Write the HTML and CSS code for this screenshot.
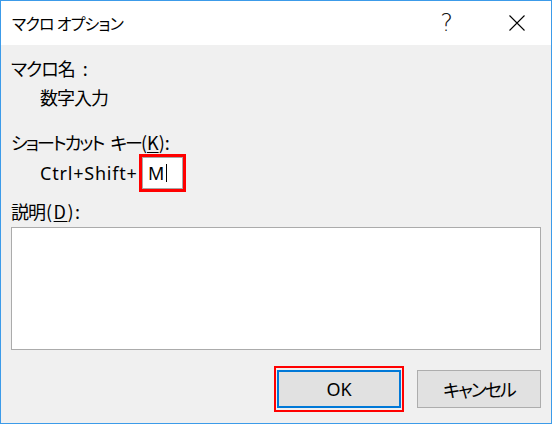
FILE: index.html
```html
<!DOCTYPE html>
<html lang="ja">
<head>
<meta charset="utf-8">
<title>マクロ オプション</title>
<link rel="stylesheet" href="styles.css">
</head>
<body>
<div class="window">
  <div class="titlebar">
    <div class="title">マクロ オプション</div>
    <div class="caption-btn help">?</div>
    <div class="caption-btn close">
      <svg width="16" height="16" viewBox="0 0 16 16"><path d="M0.5 0.5 L15.5 15.5 M15.5 0.5 L0.5 15.5" stroke="#000" stroke-width="1.1" fill="none"/></svg>
    </div>
  </div>
  <div class="content">
    <div class="row label">マクロ名<span class="colon">:</span></div>
    <div class="row indent">数字入力</div>
    <div class="row label gap-lg kana">ショートカット<span class="word">キー</span><span class="paren">(<u>K</u>):</span></div>
    <div class="shortcut indent">
      <span class="prefix">Ctrl+Shift+</span>
      <div class="keybox"><span class="key">M</span><span class="caret"></span></div>
    </div>
    <div class="row label desc">説明<span class="acc">(<u>D</u>):</span></div>
    <div class="textarea"></div>
    <div class="buttons">
      <div class="btn default">OK</div>
      <div class="btn cancel">キャンセル</div>
    </div>
  </div>
</div>
</body>
</html>
```
FILE: styles.css
```css
html, body {
  margin: 0;
  padding: 0;
}
body {
  font-family: "Noto Sans CJK JP", "Noto Sans", sans-serif;
  font-feature-settings: "palt";
  color: #000;
}
.window {
  width: 552px;
  height: 424px;
  box-sizing: border-box;
  border: 1px solid #3c9be9;
  background: #f0f0f0;
  display: flex;
  flex-direction: column;
}
.titlebar {
  height: 44px;
  background: #fff;
  display: flex;
  align-items: center;
  flex: none;
}
.title {
  flex: 1;
  padding-left: 11px;
  font-size: 16px;
  letter-spacing: -0.8px;
  line-height: 44px;
}
.caption-btn {
  width: 69px;
  height: 44px;
  display: flex;
  align-items: center;
  justify-content: center;
}
.help {
  font-family: "DejaVu Sans", sans-serif;
  font-weight: 200;
  font-size: 24px;
  color: #111;
  padding-right: 2px;
  box-sizing: border-box;
}
.content {
  padding: 11px 10px 0 10px;
  font-size: 18px;
  letter-spacing: -1px;
}
.row {
  height: 24px;
  line-height: 24px;
  white-space: nowrap;
}
.colon {
  margin-left: 8px;
}
.kana {
  letter-spacing: -2px;
}
.word {
  margin-left: 7px;
}
.paren {
  letter-spacing: 0;
}
.acc {
  letter-spacing: 1.5px;
  margin-left: 1px;
}
.indent {
  margin-left: 29px;
  margin-top: 5px;
}
.gap-lg {
  margin-top: 21px;
}
u {
  text-decoration-thickness: 1px;
  text-underline-offset: 2px;
}
.shortcut {
  margin-top: 3px;
  height: 32px;
  display: flex;
  align-items: center;
}
.prefix {
  font-family: "Noto Sans", sans-serif;
  letter-spacing: 0.8px;
  width: 102px;
  flex: none;
  white-space: nowrap;
}
.keybox {
  width: 41px;
  height: 32px;
  box-sizing: border-box;
  background: #fff;
  border: 1px solid #a8a8a8;
  outline: 3px solid #ff0000;
  display: flex;
  align-items: center;
  padding-left: 5px;
}
.key {
  font-family: "Noto Sans", sans-serif;
  font-size: 18px;
  letter-spacing: 0;
  line-height: 20px;
}
.caret {
  width: 1px;
  height: 18px;
  background: #000;
  margin-left: 2px;
}
.desc {
  margin-top: 10px;
}
.textarea {
  margin-top: 4px;
  height: 123px;
  box-sizing: border-box;
  background: #fff;
  border: 1px solid #ababab;
}
.buttons {
  margin-top: 20px;
  display: flex;
  justify-content: flex-end;
  gap: 16px;
}
.btn {
  position: relative;
  width: 124px;
  height: 38px;
  box-sizing: border-box;
  background: #e1e1e1;
  border: 1px solid #adadad;
  display: flex;
  align-items: center;
  justify-content: center;
  font-size: 18px;
}
.btn.cancel {
  letter-spacing: -2px;
}
.btn.default {
  border: 2px solid #0078d7;
  font-family: "Noto Sans", sans-serif;
  letter-spacing: 0;
}
.btn.default::after {
  content: "";
  position: absolute;
  left: -5px;
  right: -5px;
  top: -6px;
  bottom: -6px;
  border: 2px solid #ff0000;
}
```
